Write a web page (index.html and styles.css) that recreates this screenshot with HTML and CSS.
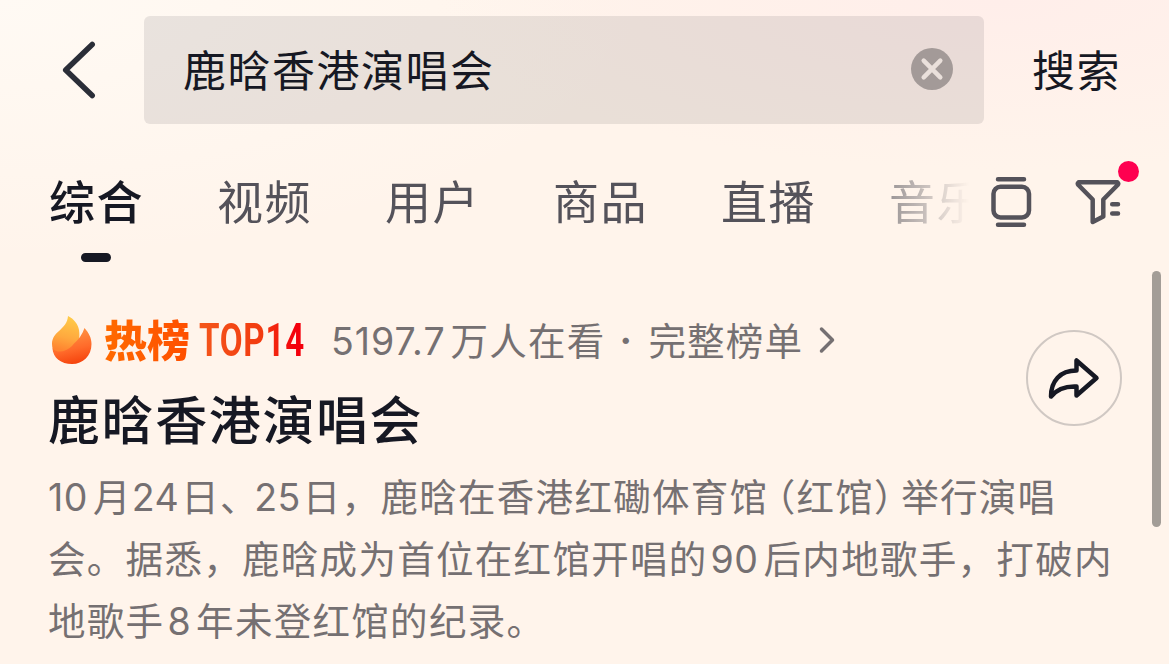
FILE: index.html
```html
<!DOCTYPE html>
<html lang="zh-CN">
<head>
    <meta charset="UTF-8">
    <meta name="viewport" content="width=device-width, initial-scale=1.0">
    <title>鹿晗香港演唱会</title>
    <link rel="stylesheet" href="styles.css">
</head>
<body>
    <header class="search-header">
        <svg class="back" width="40" height="64" viewBox="0 0 40 64">
            <path d="M35.2 6.5L8.7 32L35.2 57.5"/>
        </svg>
        <div class="search-box">
            <span class="query">鹿晗香港演唱会</span>
            <svg class="clear" width="42" height="42" viewBox="0 0 42 42">
                <circle cx="21" cy="21" r="21"/>
                <path d="M12.7 12.7L29.3 29.3M29.3 12.7L12.7 29.3"/>
            </svg>
        </div>
        <span class="search-btn">搜索</span>
    </header>

    <nav class="tab-bar">
        <div class="tabs">
            <span class="tab active">综合</span>
            <span class="tab">视频</span>
            <span class="tab">用户</span>
            <span class="tab">商品</span>
            <span class="tab">直播</span>
            <span class="tab">音乐</span>
        </div>
        <svg class="tool view-icon" width="42" height="52" viewBox="0 0 42 52">
            <path d="M7 3.3H33M7 48.7H33"/>
            <rect x="2.5" y="10.8" width="35.5" height="30.6" rx="7"/>
        </svg>
        <div class="filter">
            <svg class="tool" width="48" height="48" viewBox="0 0 48 48">
                <path d="M4.5 5.3H43.5Q44.8 6.5 43.6 8L29.3 22.5V39.5L18.7 45V22.5L4.4 8Q3.2 6.5 4.5 5.3Z"/>
                <path d="M38.200 27.300H44M38.200 36.500H44"/>
            </svg>
            <span class="dot"></span>
        </div>
    </nav>

    <main class="topic">
        <div class="topic-head">
            <div class="topic-info">
                <div class="rank">
                    <svg width="40" height="48" viewBox="0 0 40 48">
                        <defs>
                            <linearGradient id="flameBack" x1="0.5" y1="0" x2="0.35" y2="1">
                                <stop offset="0" stop-color="#ffcb48"/>
                                <stop offset="0.5" stop-color="#ffa83e"/>
                                <stop offset="0.8" stop-color="#ff8530"/>
                            </linearGradient>
                            <linearGradient id="flameFront" x1="0.4" y1="0.2" x2="0.6" y2="1">
                                <stop offset="0" stop-color="#ff8a3e"/>
                                <stop offset="0.5" stop-color="#ff6a2a"/>
                                <stop offset="1" stop-color="#f5420c"/>
                            </linearGradient>
                        </defs>
                        <path fill="url(#flameBack)" d="M16 0C22 3 26 8 27 14C27.6 18 27.5 20 27 24L20 42C8 44 0 38 0 28C0 15 15 14 16 0Z"/>
                        <path fill="url(#flameFront)" d="M32.5 12C37 17 39.5 22 39.5 28C39.5 40 31 48 20 48C9 48 1 42 0.4 32C5 38 14 36 20 30C23 26 26 24 28 21C30 18 31.5 15 32.5 12Z"/>
                    </svg>
                    <span class="rank-name">热榜</span>
                    <span class="rank-no">TOP14</span>
                    <span class="watching"><span class="num">5197.7</span>万人在看</span>
                    <span class="sep">·</span>
                    <span class="full-list">完整榜单</span>
                    <svg class="more" width="18" height="28" viewBox="0 0 18 28">
                        <path d="M3.5 3L14.5 14L3.5 25"/>
                    </svg>
                </div>
                <h1>鹿晗香港演唱会</h1>
            </div>
            <div class="share">
                <svg width="52" height="44" viewBox="0 0 52 44">
                    <path d="M28.5 4.5V14.5C12 14.5 3 25 3 40.5C9 33 17 30 28.5 30.5V39.5L48.5 22Z"/>
                </svg>
            </div>
        </div>
        <p class="summary">
            <span class="line"><span class="num first">10</span>月<span class="num day">24</span>日<span class="comma">、</span><span class="num day">25</span>日，鹿晗在香港红磡体育馆<span class="open">（</span>红馆<span class="close">）</span>举行演唱</span>
            <span class="line">会。据悉，鹿晗成为首位在红馆开唱的<span class="num">90</span>后内地歌手，打破内</span>
            <span class="line">地歌手<span class="num">8</span>年未登红馆的纪录。</span>
        </p>
    </main>

    <div class="scrollbar"></div>
</body>
</html>
```
FILE: styles.css
```css
* {
    box-sizing: border-box;
}

body {
    position: relative;
    height: 664px;
    margin: 0;
    overflow: hidden;
    font-family: "Noto Sans CJK SC", sans-serif;
    color: #161823;
    white-space: nowrap;
    text-autospace: no-autospace;
    background:
        radial-gradient(ellipse 560px 170px at 1000px 0, #ffeeea, rgba(255, 241, 236, 0)),
        radial-gradient(ellipse 650px 260px at 0 0, #fffaf4, rgba(255, 249, 243, 0)),
        #fff4eb;
}

svg {
    flex: none;
    fill: none;
    stroke-linecap: round;
    stroke-linejoin: round;
}

.search-header {
    display: flex;
    align-items: center;
    height: 108px;
    margin-top: 16px;
    padding-left: 57px;
}

.back {
    stroke: #2b2e38;
    stroke-width: 5.5;
}

.search-box {
    display: flex;
    align-items: center;
    justify-content: space-between;
    width: 840px;
    height: 108px;
    margin-left: 47px;
    padding: 0 31px 2px 39px;
    border-radius: 6px;
    background-color: rgba(24, 26, 28, 0.095);
}

.query,
.search-btn {
    padding-bottom: 2px;
    font-size: 43px;
    line-height: 60px;
    letter-spacing: 1.5px;
}

.clear circle {
    fill: #a39a98;
}

.clear path {
    stroke: #eae0db;
    stroke-width: 4.5;
}

.search-btn {
    margin-left: 48px;
    padding-bottom: 4px;
}

.tab-bar {
    display: flex;
    align-items: center;
    height: 152px;
    padding: 4px 0 0 49px;
}

.tabs {
    display: flex;
    gap: 74px;
    width: 920px;
    height: 120px;
    overflow: hidden;
    -webkit-mask-image: linear-gradient(to right, #000 800px, rgba(0, 0, 0, 0.55) 845px, transparent 920px);
    mask-image: linear-gradient(to right, #000 800px, rgba(0, 0, 0, 0.55) 845px, transparent 920px);
}

.tab {
    flex: none;
    width: 94px;
    padding-top: 24px;
    font-size: 46px;
    line-height: 66px;
    letter-spacing: 1.5px;
    color: #54525a;
}

.tab.active {
    font-weight: 500;
    color: #161823;
}

.tab.active::after {
    content: "";
    display: block;
    width: 30px;
    height: 9px;
    margin: 21px 0 0 32px;
    border-radius: 5px;
    background-color: #161823;
}

.tool {
    stroke: #54525a;
    stroke-width: 4.5;
}

.view-icon {
    margin-left: 22px;
}

.filter {
    position: relative;
    display: flex;
    margin: -2px 0 0 41px;
}

.dot {
    position: absolute;
    top: -16px;
    left: 44px;
    width: 21px;
    height: 21px;
    border-radius: 50%;
    background-color: #fe0050;
}

.topic {
    padding: 34px 47px 0 49px;
}

.topic-head {
    display: flex;
    justify-content: space-between;
}

.rank {
    display: flex;
    align-items: center;
    height: 60px;
    padding-left: 3px;
    font-size: 37.5px;
    line-height: 56px;
    letter-spacing: 1.2px;
    color: #757072;
}

.rank-name,
.rank-no {
    color: transparent;
    -webkit-background-clip: text;
    background-clip: text;
}

.rank-name {
    width: 87px;
    margin-left: 12px;
    padding-bottom: 4px;
    font-size: 43px;
    font-weight: 900;
    letter-spacing: 0;
    background-image: linear-gradient(to right, #ff6a00, #ff4e00);
}

.rank-no {
    width: 148px;
    margin: 0 -40px 0 8px;
    font-family: Roboto, sans-serif;
    font-size: 46px;
    font-weight: 700;
    letter-spacing: 1px;
    transform: scaleX(0.72);
    transform-origin: left center;
    background-image: linear-gradient(to right, #f4561a, #f23a10 60%, #f4000c 90%);
}

.watching,
.sep,
.full-list {
    padding-bottom: 2px;
}

.watching {
    margin-left: 24px;
}

.num {
    margin: 0 5px 0 3px;
    font-family: Inter, sans-serif;
    line-height: 1;
    letter-spacing: 0.5px;
}

.watching .num {
    margin-left: 0;
    letter-spacing: 1px;
}

.num.first {
    margin-left: 0;
}

.num.day {
    margin: 0 2px 0 0;
}

.sep {
    width: 38px;
    margin: 0 3px 0 2px;
    font-size: 30px;
    text-align: center;
}

.more {
    margin-left: 15px;
    stroke: #757072;
    stroke-width: 3.5;
}

h1 {
    margin: 10px 0 0 -1px;
    font-size: 52px;
    font-weight: 500;
    line-height: 76px;
    letter-spacing: 1.6px;
}

.share {
    display: flex;
    align-items: center;
    justify-content: center;
    width: 96px;
    height: 96px;
    margin-top: 20px;
    border: 2px solid #d0c8c3;
    border-radius: 50%;
}

.share svg {
    stroke: #161823;
    stroke-width: 4.5;
}

.summary {
    margin: 8px 0 0 -1px;
    font-size: 37.5px;
    line-height: 62px;
    letter-spacing: 1.3px;
    color: #757072;
}

.line {
    display: block;
}

/* half-width punctuation */
.comma,
.open,
.close {
    font-feature-settings: "halt";
}

.comma {
    margin-right: 14px;
}

.open {
    margin-left: 8px;
}

.close {
    margin-right: 7px;
}

.scrollbar {
    position: absolute;
    top: 271px;
    right: 8px;
    width: 9px;
    height: 256px;
    border-radius: 5px;
    background-color: #a39d97;
}
```
